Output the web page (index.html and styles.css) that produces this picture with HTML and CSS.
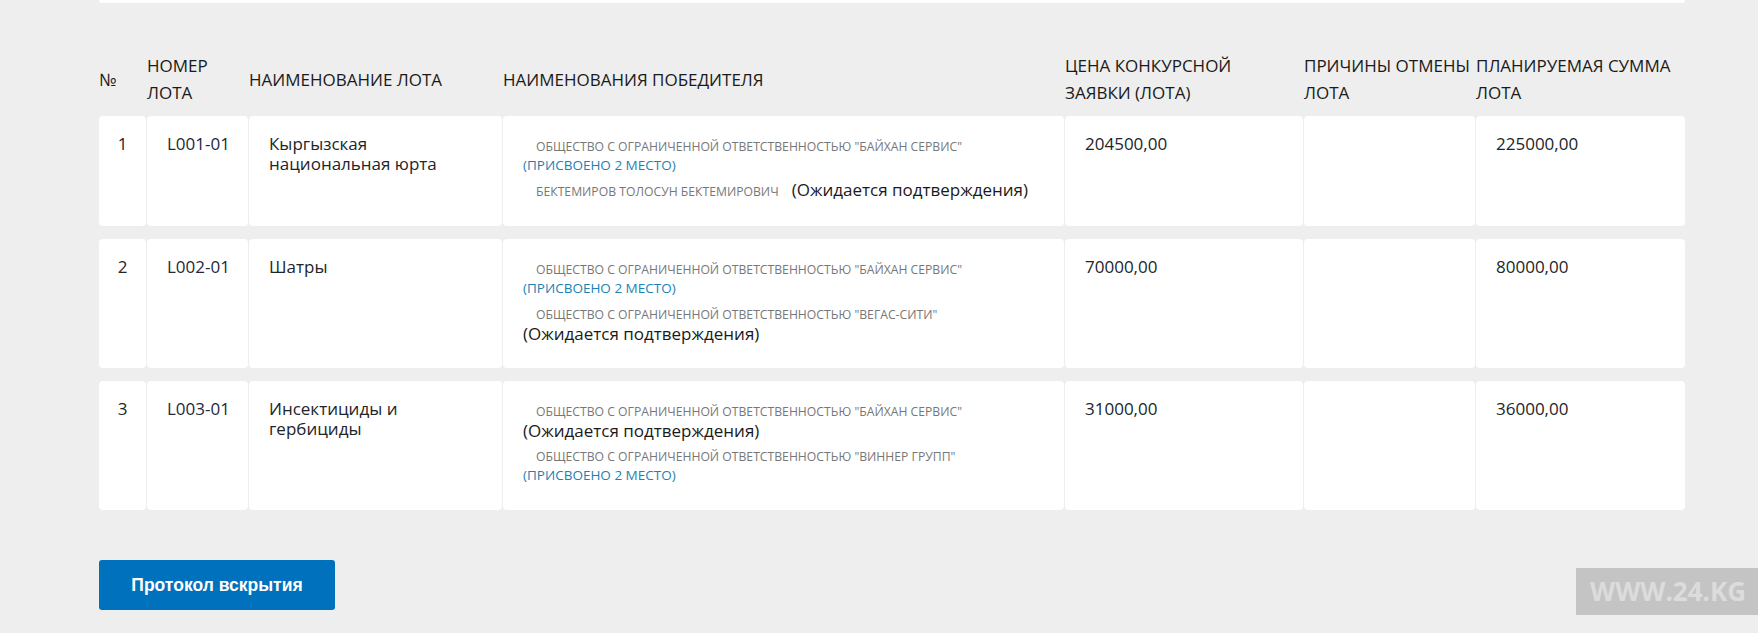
FILE: index.html
```html
<!DOCTYPE html>
<html lang="ru">
<head>
    <meta charset="UTF-8">
    <title>Итоги конкурса</title>
    <link rel="stylesheet" href="styles.css">
</head>
<body>
    <div class="container">
        <div class="top-panel"></div>

        <div class="lots-head">
            <div class="head-cell">№</div>
            <div class="head-cell">НОМЕР<br>ЛОТА</div>
            <div class="head-cell">НАИМЕНОВАНИЕ ЛОТА</div>
            <div class="head-cell">НАИМЕНОВАНИЯ ПОБЕДИТЕЛЯ</div>
            <div class="head-cell">ЦЕНА КОНКУРСНОЙ<br>ЗАЯВКИ (ЛОТА)</div>
            <div class="head-cell">ПРИЧИНЫ ОТМЕНЫ<br>ЛОТА</div>
            <div class="head-cell">ПЛАНИРУЕМАЯ СУММА<br>ЛОТА</div>
        </div>

        <div class="lots">
            <div class="lot-row">
                <div class="cell num">1</div>
                <div class="cell code">L001-01</div>
                <div class="cell">Кыргызская национальная юрта</div>
                <div class="cell winners">
                    <div class="winner">
                        <span class="winner-name">ОБЩЕСТВО С ОГРАНИЧЕННОЙ ОТВЕТСТВЕННОСТЬЮ "БАЙХАН СЕРВИС"</span>
                        <span class="place">(ПРИСВОЕНО 2 МЕСТО)</span>
                    </div>
                    <div class="winner winner-inline">
                        <span class="winner-name">БЕКТЕМИРОВ ТОЛОСУН БЕКТЕМИРОВИЧ</span>
                        <span class="pending">(Ожидается подтверждения)</span>
                    </div>
                </div>
                <div class="cell">204500,00</div>
                <div class="cell"></div>
                <div class="cell">225000,00</div>
            </div>

            <div class="lot-row">
                <div class="cell num">2</div>
                <div class="cell code">L002-01</div>
                <div class="cell">Шатры</div>
                <div class="cell winners">
                    <div class="winner">
                        <span class="winner-name">ОБЩЕСТВО С ОГРАНИЧЕННОЙ ОТВЕТСТВЕННОСТЬЮ "БАЙХАН СЕРВИС"</span>
                        <span class="place">(ПРИСВОЕНО 2 МЕСТО)</span>
                    </div>
                    <div class="winner">
                        <span class="winner-name">ОБЩЕСТВО С ОГРАНИЧЕННОЙ ОТВЕТСТВЕННОСТЬЮ "ВЕГАС-СИТИ"</span>
                        <span class="pending">(Ожидается подтверждения)</span>
                    </div>
                </div>
                <div class="cell">70000,00</div>
                <div class="cell"></div>
                <div class="cell">80000,00</div>
            </div>

            <div class="lot-row">
                <div class="cell num">3</div>
                <div class="cell code">L003-01</div>
                <div class="cell">Инсектициды и гербициды</div>
                <div class="cell winners">
                    <div class="winner">
                        <span class="winner-name">ОБЩЕСТВО С ОГРАНИЧЕННОЙ ОТВЕТСТВЕННОСТЬЮ "БАЙХАН СЕРВИС"</span>
                        <span class="pending">(Ожидается подтверждения)</span>
                    </div>
                    <div class="winner">
                        <span class="winner-name">ОБЩЕСТВО С ОГРАНИЧЕННОЙ ОТВЕТСТВЕННОСТЬЮ "ВИННЕР ГРУПП"</span>
                        <span class="place">(ПРИСВОЕНО 2 МЕСТО)</span>
                    </div>
                </div>
                <div class="cell">31000,00</div>
                <div class="cell"></div>
                <div class="cell">36000,00</div>
            </div>
        </div>

        <button class="protocol-btn">Протокол вскрытия</button>
    </div>

    <div class="watermark">WWW.24.KG</div>
</body>
</html>
```

FILE: styles.css
```css
body {
    margin: 0;
    background: #eeeeee;
    font-family: "Open Sans", "Noto Sans", sans-serif;
    color: #212529;
}

.container {
    width: 1586px;
    margin-left: 99px;
}

.top-panel {
    height: 3px;
    background: #fff;
    border-radius: 0 0 4px 4px;
}

.lots-head,
.lot-row {
    display: grid;
    grid-template-columns: 47px 101px 253px 561px 238px 171px 209px;
    column-gap: 1px;
}

.lots-head {
    margin-top: 49px;
    margin-bottom: 10px;
    font-size: 17px;
    line-height: 27px;
    color: #1a1a1a;
    align-items: center;
}

.head-cell {
    white-space: nowrap;
}

.lots {
    display: flex;
    flex-direction: column;
    gap: 13px;
}

.cell {
    background: #fff;
    border-radius: 4px;
    padding: 18px 20px;
    font-size: 17px;
    line-height: 20px;
}

.cell.num {
    padding-left: 0;
    padding-right: 0;
    text-align: center;
}

.code {
    color: #25283a;
    white-space: nowrap;
}

.winners {
    padding-top: 21px;
    padding-bottom: 18px;
}

.winner {
    margin-bottom: 7px;
    font-size: 12px;
    line-height: 19px;
}

.winner-name {
    display: block;
    padding-left: 13px;
    font-size: 12.2px;
    color: #777;
}

.place {
    display: block;
    font-size: 13.5px;
    color: #1b82b4;
}

.pending {
    display: block;
    font-size: 17px;
    color: #1a1a1a;
}

.winner-inline .winner-name,
.winner-inline .pending {
    display: inline;
}

.winner-inline .pending {
    margin-left: 10px;
    line-height: 16px;
}

.protocol-btn {
    margin-top: 50px;
    width: 236px;
    height: 50px;
    background: #0071bc;
    color: #fff;
    border: none;
    border-radius: 3px;
    font-family: "Liberation Sans", Arial, sans-serif;
    font-weight: bold;
    font-size: 17.5px;
    cursor: pointer;
}

.watermark {
    position: fixed;
    right: 0;
    bottom: 18px;
    width: 168px;
    height: 47px;
    padding-left: 14px;
    background: #c4c4c4;
    color: #dcdcdc;
    font-family: "Open Sans", sans-serif;
    font-weight: bold;
    font-size: 26px;
    line-height: 47px;
}
```
